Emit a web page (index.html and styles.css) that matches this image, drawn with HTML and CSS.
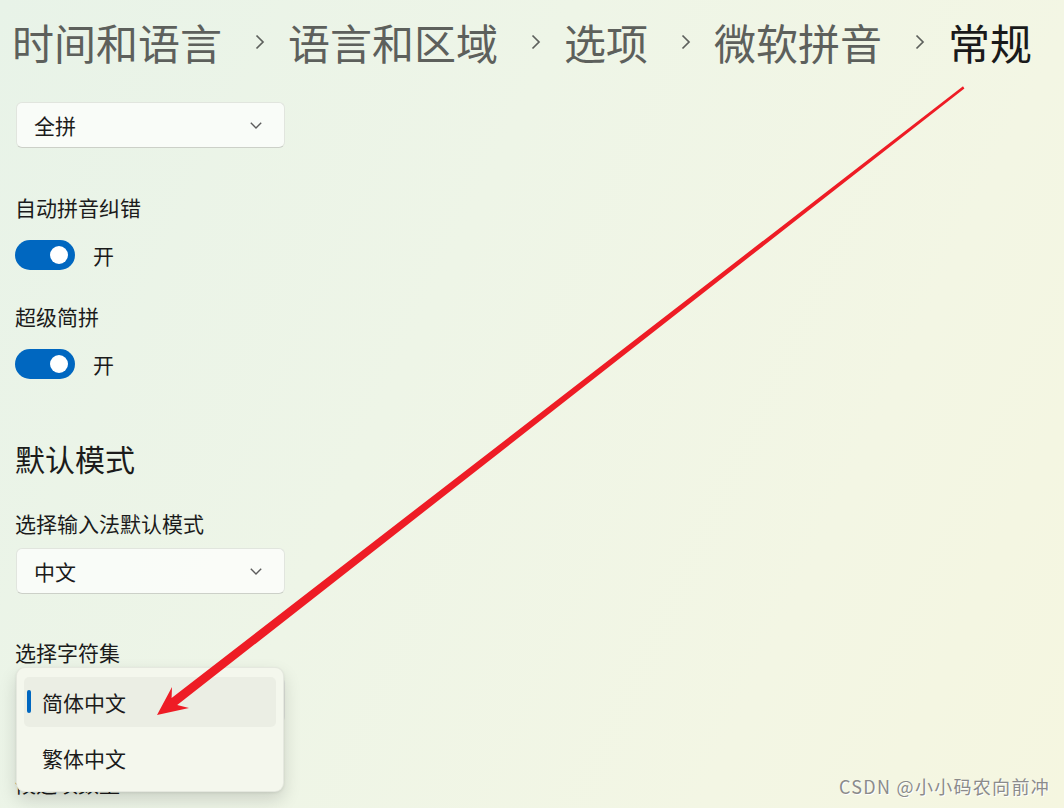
FILE: index.html
```html
<!DOCTYPE html>
<html lang="zh-CN">
<head>
    <meta charset="UTF-8">
    <meta name="viewport" content="width=device-width, initial-scale=1.0">
    <title>常规 - 微软拼音</title>
    <link rel="stylesheet" href="styles.css">
</head>
<body>
    <div class="crumbs">
        <span class="crumb">时间和语言</span>
        <svg class="sep" width="10" height="16" viewBox="0 0 10 16"><path d="M1.5 1.5 L8 8 L1.5 14.5" /></svg>
        <span class="crumb">语言和区域</span>
        <svg class="sep" width="10" height="16" viewBox="0 0 10 16"><path d="M1.5 1.5 L8 8 L1.5 14.5" /></svg>
        <span class="crumb">选项</span>
        <svg class="sep" width="10" height="16" viewBox="0 0 10 16"><path d="M1.5 1.5 L8 8 L1.5 14.5" /></svg>
        <span class="crumb">微软拼音</span>
        <svg class="sep" width="10" height="16" viewBox="0 0 10 16"><path d="M1.5 1.5 L8 8 L1.5 14.5" /></svg>
        <span class="crumb current">常规</span>
    </div>

    <div class="content">
        <div class="combo first">
            <span>全拼</span>
            <svg class="chev" width="12" height="7" viewBox="0 0 12 7"><path d="M0.8 0.8 L6 6 L11.2 0.8" /></svg>
        </div>

        <div class="label gap-lg">自动拼音纠错</div>
        <div class="toggle-row">
            <div class="toggle"><div class="knob"></div></div>
            <span>开</span>
        </div>

        <div class="label gap-md">超级简拼</div>
        <div class="toggle-row">
            <div class="toggle"><div class="knob"></div></div>
            <span>开</span>
        </div>

        <h2 class="subtitle">默认模式</h2>

        <div class="label gap-sm">选择输入法默认模式</div>
        <div class="combo">
            <span>中文</span>
            <svg class="chev" width="12" height="7" viewBox="0 0 12 7"><path d="M0.8 0.8 L6 6 L11.2 0.8" /></svg>
        </div>

        <div class="label gap-lg2">选择字符集</div>
        <div class="combo-wrap">
            <div class="combo open">
                <span>简体中文</span>
                <svg class="chev" width="12" height="7" viewBox="0 0 12 7"><path d="M0.8 0.8 L6 6 L11.2 0.8" /></svg>
            </div>
            <div class="menu">
                <div class="item selected"><i class="pill"></i>简体中文</div>
                <div class="item">繁体中文</div>
            </div>
        </div>

        <div class="label gap-xl">候选项数量</div>
    </div>

    <svg class="arrow" width="1064" height="808" viewBox="0 0 1064 808">
        <polygon points="157,715 189,708 177.2,705.1 964.4,88.4 963,86.3 171.6,697.9 172,687" />
    </svg>

    <div class="watermark">CSDN @小小码农向前冲</div>
</body>
</html>
```

FILE: styles.css
```css
html, body {
    height: 808px;
    overflow: hidden;
}
body {
    margin: 0;
    position: relative;
    font-family: "Noto Sans CJK SC", "Liberation Sans", sans-serif;
    color: #1b1b1b;
    background: linear-gradient(115deg, #e8f3e8 0%, #eef5e7 40%, #f3f6e4 75%, #f5f6e0 100%);
}
.crumbs {
    height: 84px;
    padding-left: 12px;
    display: flex;
    align-items: center;
    font-size: 42px;
    line-height: 1;
    color: #5d605c;
}
.crumb.current {
    color: #1a1a1a;
}
.sep {
    margin: 0 23px 0 33px;
    fill: none;
    stroke: #5d605c;
    stroke-width: 1.7;
}
.content {
    padding-left: 15px;
    font-size: 21px;
}
.label {
    line-height: 30px;
    height: 30px;
}
.gap-lg { margin-top: 44px; }
.gap-md { margin-top: 31px; }
.gap-sm { margin-top: 30px; }
.gap-lg2 { margin-top: 43px; }
.gap-xl { margin-top: 45px; }

.combo {
    box-sizing: border-box;
    width: 269px;
    height: 46px;
    margin-top: 10px;
    margin-left: 1px;
    padding: 0 22px 0 17px;
    display: flex;
    align-items: center;
    justify-content: space-between;
    background: rgba(252, 253, 250, 0.85);
    border: 1px solid #e1e5de;
    border-bottom-color: #ccd0c8;
    border-radius: 6px;
    line-height: 1;
}
.combo.first {
    margin-top: 18px;
}
.combo.open span {
    visibility: hidden;
}
.chev {
    fill: none;
    stroke: #5c5c5c;
    stroke-width: 1.4;
}
.toggle-row {
    margin-top: 18px;
    height: 30px;
    display: flex;
    align-items: center;
    gap: 18px;
}
.toggle {
    box-sizing: border-box;
    width: 60px;
    height: 30px;
    border-radius: 15px;
    background: #0067c0;
    display: flex;
    align-items: center;
    justify-content: flex-end;
    padding-right: 7px;
}
.knob {
    width: 18px;
    height: 18px;
    border-radius: 50%;
    background: #fff;
}
.subtitle {
    margin: 59px 0 0;
    font-size: 30px;
    font-weight: 400;
    line-height: 40px;
    height: 40px;
}
.combo-wrap {
    position: relative;
    z-index: 1;
    padding-top: 10px;
}
.combo-wrap .combo {
    margin-top: 0;
}
.menu {
    position: absolute;
    top: 0;
    left: 1px;
    box-sizing: border-box;
    width: 268px;
    height: 125px;
    padding: 9px 7px;
    background: #f4f7ed;
    border: 1px solid rgba(0, 0, 0, 0.06);
    border-radius: 9px;
    box-shadow: 0 8px 18px rgba(0, 0, 0, 0.14), 0 1px 3px rgba(0, 0, 0, 0.08);
    display: flex;
    flex-direction: column;
    gap: 6px;
}
.item {
    position: relative;
    height: 50px;
    flex: none;
    padding-left: 18px;
    display: flex;
    align-items: center;
    border-radius: 5px;
    line-height: 1;
}
.item.selected {
    background: rgba(0, 0, 0, 0.035);
}
.pill {
    position: absolute;
    left: 3px;
    top: 13px;
    width: 4px;
    height: 23px;
    border-radius: 2px;
    background: #0067c0;
}
.arrow {
    position: absolute;
    left: 0;
    top: 0;
    z-index: 2;
    pointer-events: none;
    fill: #ee1c25;
}
.watermark {
    position: absolute;
    right: 14px;
    bottom: 9px;
    font-size: 18px;
    letter-spacing: 1.3px;
    color: #8b8b8b;
    text-shadow: 1px 1px 0 #ffffff;
}
```
